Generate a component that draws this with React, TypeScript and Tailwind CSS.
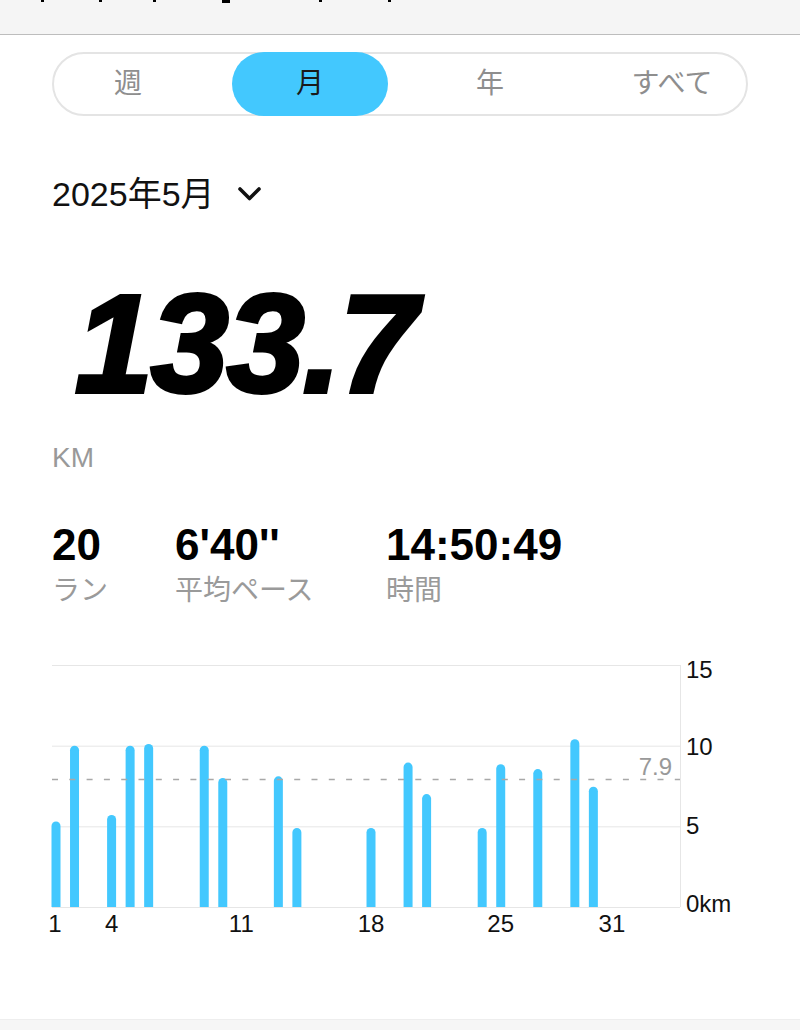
import React from "react";

type Run = { day: number; km: number };

const runs: Run[] = [
  { day: 1, km: 5.3 },
  { day: 2, km: 10 },
  { day: 4, km: 5.7 },
  { day: 5, km: 10 },
  { day: 6, km: 10.1 },
  { day: 9, km: 10 },
  { day: 10, km: 8.0 },
  { day: 13, km: 8.1 },
  { day: 14, km: 4.9 },
  { day: 18, km: 4.9 },
  { day: 20, km: 8.95 },
  { day: 21, km: 7.0 },
  { day: 24, km: 4.9 },
  { day: 25, km: 8.85 },
  { day: 27, km: 8.55 },
  { day: 29, km: 10.4 },
  { day: 30, km: 7.45 },
];

const tabs = [
  { label: "週", ml: "ml-0", w: "w-[28px]" },
  { label: "月", ml: "ml-[90px]", w: "w-[156px]", active: true },
  { label: "年", ml: "ml-[88px]", w: "w-[28px]" },
  { label: "すべて", ml: "ml-[126px]", w: "w-[84px]" },
];

const stats = [
  { value: "20", label: "ラン", w: "w-[123px]" },
  { value: "6'40''", label: "平均ペース", w: "w-[211px]" },
  { value: "14:50:49", label: "時間", w: "w-auto" },
];

// chart geometry (svg coords, svg top = page y 650)
const LEFT = 52;
const RIGHT = 680;
const BASE = 257;
const PX_PER_KM = 242 / 15;
const dayX = (d: number) => 56 + (d - 1) * 18.53;

const Chart: React.FC = () => {
  const grid = [0, 5, 10, 15];
  const avgY = BASE - 7.9 * PX_PER_KM;
  return (
    <svg width="800" height="290" className="block" style={{ fontFamily: "'Liberation Sans', sans-serif" }}>
      {grid.map((g) => (
        <line
          key={g}
          x1={LEFT}
          x2={RIGHT}
          y1={BASE - g * PX_PER_KM + 0.5}
          y2={BASE - g * PX_PER_KM + 0.5}
          stroke="#e6e6e6"
          strokeWidth="1"
        />
      ))}
      <line x1={RIGHT + 0.5} x2={RIGHT + 0.5} y1={15} y2={BASE} stroke="#e6e6e6" strokeWidth="1" />
      {runs.map((r) => {
        const w = 9;
        const x = dayX(r.day) - w / 2;
        const top = BASE - r.km * PX_PER_KM;
        const rad = w / 2;
        return (
          <path
            key={r.day}
            d={`M${x},${BASE} V${top + rad} A${rad},${rad} 0 0 1 ${x + w},${top + rad} V${BASE} Z`}
            fill="#43c8fe"
          />
        );
      })}
      <line
        x1={LEFT}
        x2={RIGHT}
        y1={avgY}
        y2={avgY}
        stroke="#a8a8a8"
        strokeWidth="1.5"
        strokeDasharray="6 11.3"
      />
      <text x={672} y={125} textAnchor="end" fontSize="24" fill="#999">
        7.9
      </text>
      <text x={686} y={28} fontSize="24" fill="#111">15</text>
      <text x={686} y={105} fontSize="24" fill="#111">10</text>
      <text x={686} y={184} fontSize="24" fill="#111">5</text>
      <text x={686} y={262} fontSize="24" fill="#111">0km</text>
      {[1, 4, 11, 18, 25, 31].map((d) => (
        <text key={d} x={d === 1 ? 55 : dayX(d)} y={282} textAnchor="middle" fontSize="24" fill="#111">
          {d}
        </text>
      ))}
    </svg>
  );
};

export default function App() {
  return (
    <div className="flex h-[1030px] w-full flex-col overflow-hidden bg-white font-['Liberation_Sans','Noto_Sans_CJK_JP',sans-serif]">
      {/* cut-off header */}
      <div className="flex h-[35px] items-start border-b border-[#bdbdbd] bg-[#f5f5f5]">
        <span className="ml-[41px] h-[2px] w-[3px] bg-black" />
        <span className="ml-[55px] h-[2px] w-[3px] bg-black" />
        <span className="ml-[51px] h-[2px] w-[3px] bg-black" />
        <span className="ml-[66px] h-[3px] w-[8px] bg-black" />
        <span className="ml-[89px] h-[2px] w-[3px] bg-black" />
        <span className="ml-[66px] h-[2px] w-[3px] bg-black" />
      </div>

      {/* period tabs */}
      <div className="mx-[52px] mt-[17px] flex h-16 items-center rounded-full border-2 border-[#e4e4e4] pl-[60px]">
        {tabs.map((t) => (
          <div
            key={t.label}
            className={`${t.ml} ${t.w} flex shrink-0 items-center justify-center text-[28px] leading-none ${
              t.active ? "h-16 rounded-full bg-[#43c8fe] text-[#1a1a1a]" : "text-[#8e8e8e]"
            }`}
          >
            {t.label}
          </div>
        ))}
      </div>

      {/* month picker */}
      <div className="ml-[52px] mt-[61px] flex items-center">
        <span className="text-[34px] leading-none text-[#111]">2025年5月</span>
        <svg width="25" height="16" viewBox="0 0 25 16" className="ml-[22px]">
          <polyline points="3,3 12.5,12.5 22,3" fill="none" stroke="#111" strokeWidth="3.6" strokeLinecap="round" strokeLinejoin="round" />
        </svg>
      </div>

      {/* total distance */}
      <div className="ml-[75px] mt-[63px] text-[140px] font-bold italic leading-none tracking-[-2px] text-black [-webkit-text-stroke:4px_black]">
        133.7
      </div>
      <div className="ml-[52px] mt-[30px] text-[28px] leading-none text-[#999]">KM</div>

      {/* stats */}
      <div className="ml-[52px] mt-[51px] flex">
        {stats.map((s) => (
          <div key={s.label} className={`${s.w} flex flex-col`}>
            <span className="text-[44px] font-bold leading-none text-black">{s.value}</span>
            <span className="mt-[10px] text-[28px] leading-none text-[#9a9a9a]">{s.label}</span>
          </div>
        ))}
      </div>

      {/* distance chart */}
      <div className="mt-[45px]">
        <Chart />
      </div>

      <div className="mt-auto h-[11px] border-t border-[#eeeeee] bg-[#f6f6f6]" />
    </div>
  );
}
